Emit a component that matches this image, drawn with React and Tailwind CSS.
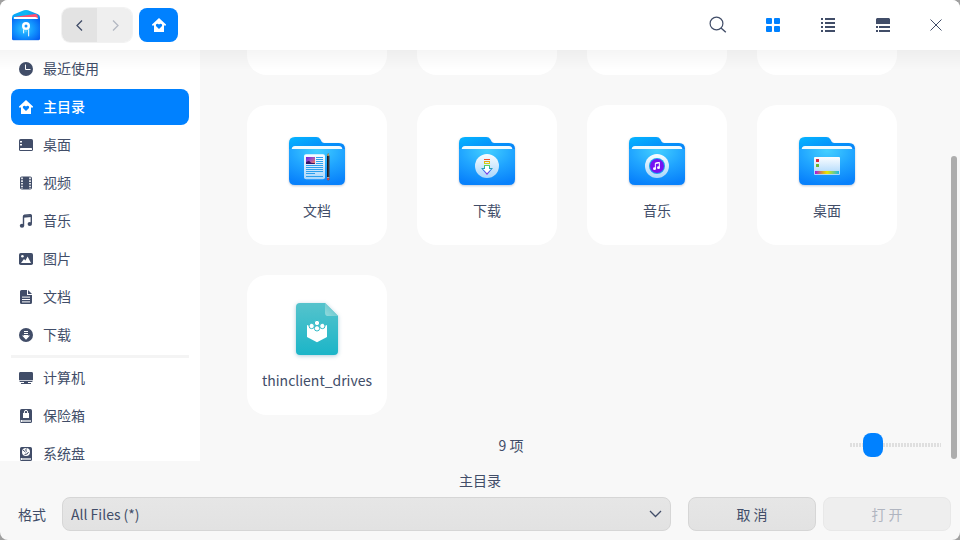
import React, { useState } from "react";

const SmallIcon = ({ children }) => (
  <svg width="14" height="14" viewBox="0 0 14 14" fill="currentColor" className="shrink-0" aria-hidden="true">
    {children}
  </svg>
);

const HomeIcon = () => (
  <SmallIcon>
    <path d="M7 0L14 6.6V7.6H12V14H2V7.6H0V6.6Z" />
    <path d="M7 11L4.2 8.2C2.9 6.6 5.3 4.8 7 6.6C8.7 4.8 11.1 6.6 9.8 8.2Z" fill="#0081ff" />
  </SmallIcon>
);

const RecentIcon = () => (
  <SmallIcon>
    <circle cx="7" cy="7" r="7" />
    <path d="M6.5 2.5V7.5H11.5" fill="none" stroke="#fff" />
  </SmallIcon>
);

const DesktopIcon = () => (
  <SmallIcon>
    <rect y="1" width="14" height="12" rx="1.6" />
    <path d="M1 3H3V4.500H1ZM1 6H3V7.500H1Z" fill="#fff" />
    <rect x="1" y="10" width="12" height="2" rx="0.6" fill="#fff" />
  </SmallIcon>
);

const VideoIcon = () => (
  <SmallIcon>
    <rect x="1" y="0.5" width="12" height="13" rx="1.8" />
    <path d="M3 1.6V13M11 1.6V13" stroke="#fff" strokeWidth="1.6" strokeDasharray="1.6 1.1" />
  </SmallIcon>
);

const MusicIcon = () => (
  <SmallIcon>
    <path d="M4.500 11.500V2.500Q4.500 1.500 5.500 1.300L11.300 0.800Q12.300 0.700 12.300 1.800V9.500" fill="none" stroke="currentColor" strokeWidth="1.400" />
    <path d="M4.500 1.800L12.300 0.900V3L4.500 3.800Z" />
    <ellipse cx="3" cy="11.7" rx="2.2" ry="2" />
    <ellipse cx="10.8" cy="9.9" rx="2.2" ry="2" />
  </SmallIcon>
);

const PictureIcon = () => (
  <SmallIcon>
    <rect y="1" width="14" height="12" rx="1.8" />
    <circle cx="3.4" cy="4.2" r="1.3" fill="#fff" />
    <path d="M2 11L5 7L6.4 8.4L8.6 4.6L12 11Z" fill="#fff" />
  </SmallIcon>
);

const DocumentIcon = () => (
  <SmallIcon>
    <path d="M2.6 0H8V4.9H13V12.4A1.6 1.6 0 0 1 11.4 14H2.6A1.6 1.6 0 0 1 1 12.4V1.6A1.6 1.6 0 0 1 2.6 0ZM9 0L13 4H9Z" />
    <path d="M3 7.1H11M3 9.5H11M3 11.9H11" stroke="#fff" />
  </SmallIcon>
);

const DownloadIcon = () => (
  <SmallIcon>
    <circle cx="7" cy="7" r="7" />
    <path d="M5 2.9H9V4H5ZM5 5H9V6H5ZM5 7H9V7.6H11L7 11.8L3 7.6H5Z" fill="#fff" />
  </SmallIcon>
);

const ComputerIcon = () => (
  <SmallIcon>
    <path d="M1.400 1H12.600A1.400 1.400 0 0 1 14 2.400V9H0V2.400A1.400 1.400 0 0 1 1.400 1Z" />
    <path d="M0 9.800H14L13 10.900H1Z" />
    <path d="M5 10.900H9V11.900H12V13H2V11.900H5Z" />
  </SmallIcon>
);

const VaultIcon = () => (
  <SmallIcon>
    <rect x="1" width="12" height="14" rx="1.6" />
    <path d="M4 4H10V9H4Z" fill="#fff" />
    <path d="M5.4 4.4V3A1.6 1.6 0 0 1 8.6 3V4.4" stroke="#fff" fill="none" />
    <path d="M2.5 11H12V13H2.5A1 1 0 0 1 2.5 11Z" fill="#fff" />
    <path d="M3 12H12" stroke="currentColor" strokeWidth="0.7" />
  </SmallIcon>
);

const DiskIcon = () => (
  <SmallIcon>
    <rect x="1" width="12" height="14" rx="1.6" />
    <circle cx="7" cy="5.1" r="4" fill="#fff" />
    <path d="M4 3L6.6 5.2M7.4 1.5Q6 3 7.6 4.6M9.5 5Q8.8 7.6 5.6 7.5" stroke="currentColor" fill="none" strokeWidth="1" />
    <path d="M2.5 11H12V13H2.5A1 1 0 0 1 2.5 11Z" fill="#fff" />
    <path d="M3 12H12" stroke="currentColor" strokeWidth="0.7" />
  </SmallIcon>
);

const AppLogo = () => (
  <svg width="28" height="31" viewBox="0 0 84 93" className="shrink-0" aria-hidden="true">
    <defs>
      <linearGradient id="logoBack" x1="0" y1="0" x2="1" y2="0">
        <stop offset="0" stopColor="#0aa4f8" />
        <stop offset="0.5" stopColor="#0cb8f5" />
        <stop offset="1" stopColor="#0786ee" />
      </linearGradient>
      <radialGradient id="logoFront" cx="0.45" cy="0.5" r="0.65">
        <stop offset="0" stopColor="#35c8ff" />
        <stop offset="0.5" stopColor="#1398ff" />
        <stop offset="1" stopColor="#0562f2" />
      </radialGradient>
    </defs>
    <path d="M0 22Q0 16 6 13L36 1Q42 -1 48 1L78 13Q84 16 84 22V60H0Z" fill="url(#logoBack)" />
    <path d="M10 20L70 12Q75 12 77 17L78 30H8Z" fill="#ff4f70" />
    <path d="M6 21H70Q77 21 79 29H5Z" fill="#fff" />
    <path d="M0 22Q1 27 8 27H76Q83 27 84 22V86Q84 91 79 91H5Q0 91 0 86Z" fill="url(#logoFront)" />
    <path d="M3 92H81" stroke="#dbe6f5" strokeWidth="2" />
    <circle cx="42" cy="48" r="12" fill="#fff" />
    <circle cx="42" cy="48" r="4.5" fill="#1494ff" />
    <path d="M35 58V70M50 58V79" stroke="#fff" strokeWidth="3" />
    <path d="M42 58V66" stroke="#8edcff" strokeWidth="2" />
  </svg>
);

const Folder = ({ children }) => (
  <svg width="56" height="48" viewBox="0 0 168 144" className="overflow-visible drop-shadow-[0_1px_1px_rgba(0,40,100,0.25)]" aria-hidden="true">
    <defs>
      <linearGradient id="folderBack" x1="0" y1="0" x2="1" y2="1">
        <stop offset="0" stopColor="#06b5ff" />
        <stop offset="0.45" stopColor="#0595fb" />
        <stop offset="1" stopColor="#0778f5" />
      </linearGradient>
      <radialGradient id="folderFront" cx="0.5" cy="0.05" r="0.95">
        <stop offset="0" stopColor="#43cfff" />
        <stop offset="0.5" stopColor="#20a5ff" />
        <stop offset="1" stopColor="#0881fb" />
      </radialGradient>
      <linearGradient id="badge" x1="0" y1="0" x2="0" y2="1">
        <stop offset="0" stopColor="#fafdff" />
        <stop offset="1" stopColor="#a9d6fb" />
      </linearGradient>
      <linearGradient id="rainbowDown" x1="0" y1="0" x2="0" y2="1">
        <stop offset="0" stopColor="#f43b32" />
        <stop offset="0.25" stopColor="#e6d800" />
        <stop offset="0.48" stopColor="#20c78e" />
        <stop offset="0.72" stopColor="#2d72ee" />
        <stop offset="1" stopColor="#a51ce0" />
      </linearGradient>
      <linearGradient id="rainbowAcross" x1="0" y1="0" x2="1" y2="0">
        <stop offset="0" stopColor="#a911e6" />
        <stop offset="0.3" stopColor="#dc9b35" />
        <stop offset="0.5" stopColor="#e8e800" />
        <stop offset="1" stopColor="#15b8ee" />
      </linearGradient>
      <linearGradient id="photo" x1="0" y1="0" x2="1" y2="1">
        <stop offset="0" stopColor="#6a18e8" />
        <stop offset="0.5" stopColor="#a557b8" />
        <stop offset="1" stopColor="#ff7a4a" />
      </linearGradient>
    </defs>
    <path d="M0 18Q0 0 18 0H82Q90 0 94 7L98 14Q101 18 107 18H150Q168 18 168 36V60H0Z" fill="url(#folderBack)" />
    <path d="M8 38Q8 27 18 27H150Q160 27 160 38Z" fill="#f0faff" />
    <path d="M0 36H168V126Q168 144 150 144H18Q0 144 0 126Z" fill="url(#folderFront)" />
    {children}
  </svg>
);

const DocumentsFolder = () => (
  <Folder>
    <rect x="45" y="52" width="63" height="75" rx="6" fill="url(#badge)" />
    <rect x="51" y="60" width="27" height="21" fill="url(#photo)" />
    <path d="M51 81V75L60 71L66 77L78 79V81Z" fill="#351468" />
    <path d="M81 61.5H102M81 67.5H102M81 73.5H102M81 79.5H102M51 85.5H102M51 91.5H102M51 97.5H102M51 103.5H102M51 109.5H78M51 118.5H102" stroke="#2ba0ee" strokeWidth="3" />
    <path d="M114 56L117.500 48L121 56V126Q121 130 117.500 130Q114 130 114 126Z" fill="#161c26" />
    <path d="M114 56L117.500 48L121 56Z" fill="#e8b458" />
    <path d="M119.500 57V121" stroke="#795548" strokeWidth="2" />
    <path d="M114 121H121V124H114Z" fill="#e8edf2" />
    <path d="M114 124H121V127Q121 130 117.500 130Q114 130 114 127Z" fill="#e4453f" />
  </Folder>
);

const DownloadsFolder = () => (
  <Folder>
    <circle cx="84" cy="87" r="36" fill="url(#badge)" />
    <path d="M75 66H93V69H75ZM75 72H93V81H75ZM78 75V78H90V75ZM75 84H93V93H102L84 114L66 93H75Z" fill="url(#rainbowDown)" fillRule="evenodd" />
    <path d="M78 87H90V96H96L84 109L72 96H78Z" fill="#fff" />
  </Folder>
);

const MusicFolder = () => (
  <Folder>
    <circle cx="84" cy="87" r="36" fill="url(#badge)" />
    <circle cx="84" cy="87" r="24" fill="#19a3ee" />
    <circle cx="84" cy="87" r="21" fill="#7612f2" />
    <path d="M79 95V79L91 76V92" fill="none" stroke="#fff" strokeWidth="3" />
    <path d="M79 77L91 75V79L79 81Z" fill="#fff" />
    <ellipse cx="76.500" cy="95" rx="4.500" ry="4" fill="#fff" />
    <ellipse cx="88.500" cy="92" rx="4.500" ry="4" fill="#fff" />
  </Folder>
);

const DesktopFolder = () => (
  <Folder>
    <rect x="45" y="60" width="78" height="54" rx="3" fill="url(#badge)" />
    <rect x="51" y="66" width="9" height="9" rx="1" fill="#dc2340" />
    <rect x="51" y="81" width="9" height="9" rx="1" fill="#69b82f" />
    <rect x="48" y="102" width="72" height="9" fill="url(#rainbowAcross)" />
  </Folder>
);

const ArchiveFile = () => (
  <svg width="42" height="52" viewBox="0 0 126 156" className="overflow-visible drop-shadow-[0_1px_2px_rgba(20,110,150,0.35)]" aria-hidden="true">
    <defs>
      <linearGradient id="fileBody" x1="0" y1="0" x2="0" y2="1">
        <stop offset="0" stopColor="#55c3cc" />
        <stop offset="1" stopColor="#1bb5c8" />
      </linearGradient>
      <linearGradient id="fileFold" x1="0" y1="1" x2="1" y2="0">
        <stop offset="0" stopColor="#93dadd" />
        <stop offset="1" stopColor="#55bfc7" />
      </linearGradient>
    </defs>
    <path d="M12 0H87L126 39V144Q126 156 114 156H12Q0 156 0 144V12Q0 0 12 0Z" fill="url(#fileBody)" />
    <path d="M87 0L126 39H97Q87 39 87 29Z" fill="url(#fileFold)" />
    <path d="M33 66L63 78L93 66V102L63 118L33 102Z" fill="#fff" />
    <g fill="#fff" stroke="#38bcc8" strokeWidth="3">
      <circle cx="47" cy="69" r="8" />
      <circle cx="79" cy="69" r="8" />
      <circle cx="63" cy="60" r="8" />
      <circle cx="63" cy="76" r="8" />
    </g>
  </svg>
);

const SearchIcon = () => (
  <svg width="18" height="18" viewBox="0 0 18 18" fill="none" stroke="currentColor" strokeWidth="1.2" aria-hidden="true">
    <circle cx="7.500" cy="7.500" r="6.400" />
    <path d="M12 12L16.800 16.300" strokeWidth="1.400" />
  </svg>
);

const GridIcon = () => (
  <SmallIcon>
    <rect width="6" height="6" rx="1" />
    <rect x="8" width="6" height="6" rx="1" />
    <rect y="8" width="6" height="6" rx="1" />
    <rect x="8" y="8" width="6" height="6" rx="1" />
  </SmallIcon>
);

const ListIcon = () => (
  <SmallIcon>
    <path d="M0 0H2V2H0ZM4 0H14V2H4ZM0 4H2V6H0ZM4 4H14V6H4ZM0 8H2V10H0ZM4 8H14V10H4ZM0 12H2V14H0ZM4 12H14V14H4Z" />
  </SmallIcon>
);

const GroupIcon = () => (
  <SmallIcon>
    <path d="M1 0H13L14 1V6H0V1ZM0 8H2V10H0ZM3 8H14V10H3ZM0 12H2V14H0ZM3 12H14V14H3Z" />
  </SmallIcon>
);

const CloseIcon = () => (
  <svg width="12" height="12" viewBox="0 0 12 12" fill="none" stroke="currentColor" aria-hidden="true">
    <path d="M0.500 0.500L11.500 11.500M11.500 0.500L0.500 11.500" />
  </svg>
);

const Chevron = ({ d, width, height }) => (
  <svg width={width} height={height} viewBox={`0 0 ${width} ${height}`} fill="none" stroke="currentColor" strokeWidth="1.300" aria-hidden="true">
    <path d={d} />
  </svg>
);

const places = [
  { name: "最近使用", Icon: RecentIcon },
  { name: "主目录", Icon: HomeIcon },
  { name: "桌面", Icon: DesktopIcon },
  { name: "视频", Icon: VideoIcon },
  { name: "音乐", Icon: MusicIcon },
  { name: "图片", Icon: PictureIcon },
  { name: "文档", Icon: DocumentIcon },
  { name: "下载", Icon: DownloadIcon },
];

const devices = [
  { name: "计算机", Icon: ComputerIcon },
  { name: "保险箱", Icon: VaultIcon },
  { name: "系统盘", Icon: DiskIcon },
];

const files = [
  { name: "文档", Icon: DocumentsFolder },
  { name: "下载", Icon: DownloadsFolder },
  { name: "音乐", Icon: MusicFolder },
  { name: "桌面", Icon: DesktopFolder },
  { name: "thinclient_drives", Icon: ArchiveFile },
];

const views = [
  { name: "图标视图", Icon: GridIcon },
  { name: "列表视图", Icon: ListIcon },
  { name: "分组视图", Icon: GroupIcon },
];

function Place({ name, Icon, current, onSelect }) {
  return (
    <li>
      <button
        type="button"
        onClick={onSelect}
        className={`flex h-9 w-full items-center gap-2.5 rounded-lg px-2 text-left ${current ? "bg-[#0081ff] font-medium text-white" : ""}`}
      >
        <Icon />
        <span className="pb-0.5">{name}</span>
      </button>
    </li>
  );
}

export default function App() {
  const [place, setPlace] = useState("主目录");
  const [view, setView] = useState("图标视图");

  return (
    <div className="h-screen bg-[#a0a0a0]">
      <div className="flex h-full flex-col overflow-hidden rounded-lg bg-[#f8f8f8] font-['Noto_Sans_CJK_SC',sans-serif] text-sm leading-5 text-[#414d68]">
        <header className="flex h-[50px] shrink-0 items-center bg-white pr-1.5 pl-3">
          <AppLogo />
          <div className="ml-[22px] flex h-[34px] overflow-hidden rounded-lg ring-1 ring-black/5">
            <button type="button" aria-label="后退" className="flex w-[35px] items-center justify-center bg-[#e3e3e3]">
              <Chevron d="M6 0.500L1 5.500L6 10.500" width={8} height={11} />
            </button>
            <button type="button" aria-label="前进" disabled className="flex w-[35px] items-center justify-center bg-[#efefef] text-[#b3b8c2]">
              <Chevron d="M2 0.500L7 5.500L2 10.500" width={8} height={11} />
            </button>
          </div>
          <button type="button" aria-label="主目录" className="ml-[7px] flex h-[34px] w-[39px] items-center justify-center rounded-lg bg-[#0081ff] text-white">
            <HomeIcon />
          </button>
          <div className="ml-auto flex gap-[19px]">
            <button type="button" aria-label="搜索" className="flex size-9 items-center justify-center">
              <SearchIcon />
            </button>
            {views.map(({ name, Icon }) => (
              <button
                key={name}
                type="button"
                aria-label={name}
                onClick={() => setView(name)}
                className={`flex size-9 items-center justify-center ${view === name ? "text-[#0081ff]" : ""}`}
              >
                <Icon />
              </button>
            ))}
          </div>
          <button type="button" aria-label="关闭" className="ml-[17px] flex size-9 items-center justify-center">
            <CloseIcon />
          </button>
        </header>

        <div className="relative flex min-h-0 flex-1">
          <div className="pointer-events-none absolute inset-x-0 top-0 z-10 h-5 bg-linear-to-b from-black/4 to-transparent" />
          <nav className="w-[200px] shrink-0 overflow-y-auto bg-white px-[11px] pt-px [scrollbar-width:none]">
            <ul className="flex flex-col gap-0.5">
              {places.map((item) => (
                <Place key={item.name} {...item} current={place === item.name} onSelect={() => setPlace(item.name)} />
              ))}
            </ul>
            <hr className="my-0.5 h-[3px] border-0 bg-[#f4f4f4]" />
            <ul className="flex flex-col gap-0.5">
              {devices.map((item) => (
                <Place key={item.name} {...item} current={place === item.name} onSelect={() => setPlace(item.name)} />
              ))}
            </ul>
          </nav>

          <main className="flex min-w-0 flex-1 flex-col">
            <div className="flex min-h-0 flex-1 flex-col justify-end overflow-hidden pb-[15px] pl-[47px]">
              <ul className="grid grid-cols-[repeat(auto-fill,140px)] gap-[30px]">
                {[0, 1, 2, 3].map((n) => (
                  <li key={n} className="h-[140px] rounded-[20px] bg-white" />
                ))}
                {files.map(({ name, Icon }) => (
                  <li key={name}>
                    <button type="button" className="flex h-[140px] w-full flex-col items-center rounded-[20px] bg-white">
                      <span className="flex h-20 items-end">
                        <Icon />
                      </span>
                      <span className="mt-[15px]">{name}</span>
                    </button>
                  </li>
                ))}
              </ul>
            </div>
            <div className="flex h-[31px] shrink-0 items-center pr-2.5 pb-0.5">
              <span className="flex-1 text-center">9 项</span>
              <input
                type="range"
                aria-label="图标大小"
                defaultValue="18"
                className="ml-7 h-6 w-[91px] appearance-none bg-[repeating-linear-gradient(90deg,#dfdfdf_0_2px,transparent_2px_3px)] bg-[length:100%_4px] bg-center bg-no-repeat [&::-webkit-slider-thumb]:h-6 [&::-webkit-slider-thumb]:w-5 [&::-webkit-slider-thumb]:appearance-none [&::-webkit-slider-thumb]:rounded-lg [&::-webkit-slider-thumb]:bg-[#0081ff]"
              />
            </div>
          </main>

          <div className="flex w-[9px] shrink-0 flex-col justify-end pb-0.5" aria-hidden="true">
            <div className="h-[74%] w-1.5 rounded-full bg-[#adadad]" />
          </div>
        </div>

        <footer className="flex shrink-0 flex-col gap-[7px] pt-[9px] pb-[9px]">
          <h1 className="text-center">主目录</h1>
          <div className="flex items-center pr-[9px] pl-[18px]">
            <label htmlFor="format" className="w-11 shrink-0">
              格式
            </label>
            <div className="relative min-w-0 flex-1">
              <select
                id="format"
                className="h-[34px] w-full appearance-none rounded-lg border border-[#d6d6d6] bg-linear-to-b from-[#e6e6e6] to-[#e2e2e2] px-2"
              >
                <option>All Files (*)</option>
              </select>
              <span className="pointer-events-none absolute inset-y-0 right-2 flex items-center">
                <Chevron d="M1 1L6.500 6.500L12 1" width={14} height={8} />
              </span>
            </div>
            <button type="button" className="ml-[17px] h-[34px] w-32 rounded-lg border border-[#d6d6d6] bg-linear-to-b from-[#e6e6e6] to-[#e2e2e2]">
              取 消
            </button>
            <button type="button" disabled className="ml-[7px] h-[34px] w-32 rounded-lg border border-[#e8e8e8] bg-[#eeeeee] text-[#b0b5c0]">
              打 开
            </button>
          </div>
        </footer>
      </div>
    </div>
  );
}
